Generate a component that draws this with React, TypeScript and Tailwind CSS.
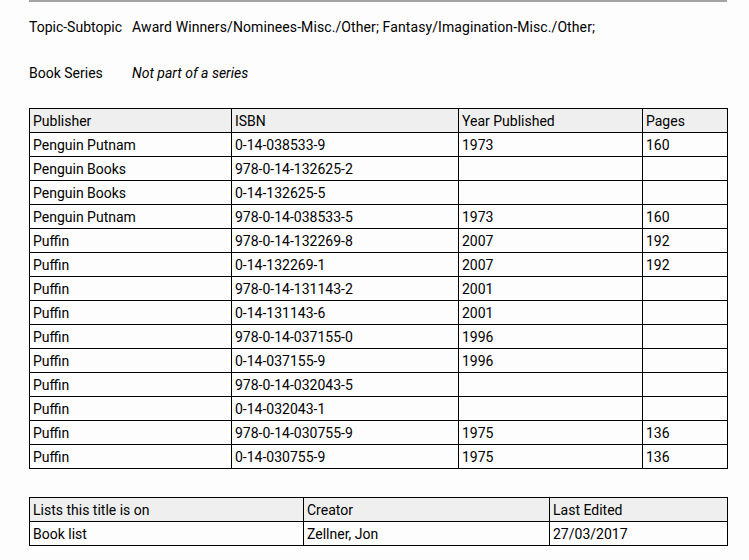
import React from "react";

const rows: [string, string, string, string][] = [
  ["Penguin Putnam", "0-14-038533-9", "1973", "160"],
  ["Penguin Books", "978-0-14-132625-2", "", ""],
  ["Penguin Books", "0-14-132625-5", "", ""],
  ["Penguin Putnam", "978-0-14-038533-5", "1973", "160"],
  ["Puffin", "978-0-14-132269-8", "2007", "192"],
  ["Puffin", "0-14-132269-1", "2007", "192"],
  ["Puffin", "978-0-14-131143-2", "2001", ""],
  ["Puffin", "0-14-131143-6", "2001", ""],
  ["Puffin", "978-0-14-037155-0", "1996", ""],
  ["Puffin", "0-14-037155-9", "1996", ""],
  ["Puffin", "978-0-14-032043-5", "", ""],
  ["Puffin", "0-14-032043-1", "", ""],
  ["Puffin", "978-0-14-030755-9", "1975", "136"],
  ["Puffin", "0-14-030755-9", "1975", "136"],
];

const cell = "border border-black h-[24px] px-[3px] py-0 text-left align-middle font-normal leading-[22px]";

export default function App() {
  return (
    <div
      className="w-[749px] h-[560px] bg-[#fdfdfd] text-[14px] text-black overflow-hidden"
      style={{ fontFamily: "Roboto, 'Liberation Sans', sans-serif" }}
    >
      <div className="ml-[29px] w-[698px]">
        <div className="h-[2px] bg-[#a3a3a3]" />
        <div className="flex mt-[16px] h-[18px] items-center">
          <span className="w-[103px]">Topic-Subtopic</span>
          <span className="tracking-[0.1px]">Award Winners/Nominees-Misc./Other; Fantasy/Imagination-Misc./Other;</span>
        </div>
        <div className="flex mt-[28px] h-[18px] items-center">
          <span className="w-[103px]">Book Series</span>
          <span className="italic">Not part of a series</span>
        </div>
        <table className="mt-[26px] w-[698px] table-fixed border-collapse">
          <colgroup>
            <col className="w-[202px]" />
            <col className="w-[227px]" />
            <col className="w-[184px]" />
            <col className="w-[85px]" />
          </colgroup>
          <thead>
            <tr className="bg-[#efefef]">
              <th className={cell}>Publisher</th>
              <th className={cell}>ISBN</th>
              <th className={cell}>Year Published</th>
              <th className={cell}>Pages</th>
            </tr>
          </thead>
          <tbody>
            {rows.map((r, i) => (
              <tr key={i}>
                {r.map((c, j) => (
                  <td key={j} className={cell}>
                    {c}
                  </td>
                ))}
              </tr>
            ))}
          </tbody>
        </table>
        <table className="mt-[28px] w-[698px] table-fixed border-collapse">
          <colgroup>
            <col className="w-[274px]" />
            <col className="w-[246px]" />
            <col className="w-[178px]" />
          </colgroup>
          <thead>
            <tr className="bg-[#efefef]">
              <th className={cell}>Lists this title is on</th>
              <th className={cell}>Creator</th>
              <th className={cell}>Last Edited</th>
            </tr>
          </thead>
          <tbody>
            <tr>
              <td className={cell}>Book list</td>
              <td className={cell}>Zellner, Jon</td>
              <td className={cell}>27/03/2017</td>
            </tr>
          </tbody>
        </table>
      </div>
    </div>
  );
}
